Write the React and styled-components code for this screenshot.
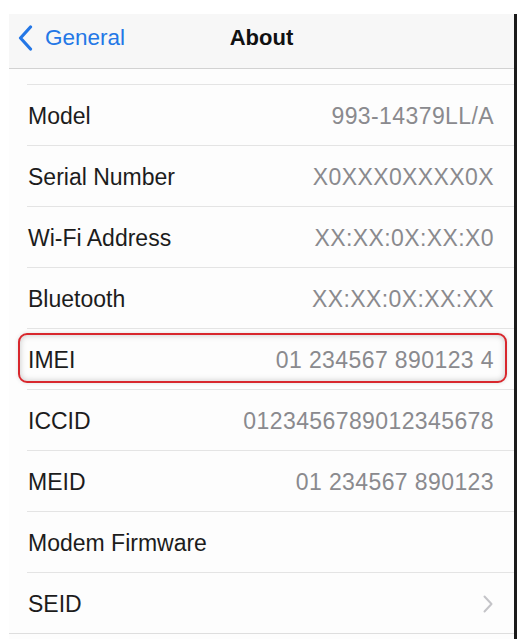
import React from 'react';
import styled, { createGlobalStyle, css } from 'styled-components';

const GlobalStyle = createGlobalStyle`
  html, body {
    margin: 0;
    padding: 0;
    background: #ffffff;
  }
  body {
    font-family: "Liberation Sans", Arial, Helvetica, sans-serif;
  }
`;

const Frame = styled.div`
  padding: 14px 0 0 9px;
  height: 639px;
  box-sizing: border-box;
  overflow: hidden;
`;

const Screen = styled.div`
  width: 505px;
  height: 625px;
  border-right: 3px solid #1b1b1b;
  display: flex;
  flex-direction: column;
  background: #fdfdfd;
`;

const NavBar = styled.div`
  height: 55px;
  box-sizing: border-box;
  flex-shrink: 0;
  background: #f7f7f7;
  border-bottom: 1px solid #d2d2d2;
  display: grid;
  grid-template-columns: 1fr auto 1fr;
  align-items: center;
  padding-bottom: 7px;
`;

const BackButton = styled.div`
  display: flex;
  align-items: center;
  gap: 12px;
  padding-left: 9px;
  color: #2477e6;
  font-size: 22.5px;
  svg {
    display: block;
  }
`;

const Title = styled.div`
  font-weight: 700;
  font-size: 22px;
  color: #111111;
`;

const Spacer = styled.div`
  height: 15px;
  flex-shrink: 0;
`;

const List = styled.div`
  padding-left: 18px;
  border-bottom: 1px solid #dedede;
`;

const Row = styled.div`
  position: relative;
  border-top: 1px solid #e4e4e4;
  padding: 2px 20px 0 1px;
  box-sizing: border-box;
  height: 61px;
  display: flex;
  align-items: center;
  justify-content: space-between;
  font-size: 23px;

  ${(p) =>
    p.$highlighted &&
    css`
      &::after {
        content: '';
        position: absolute;
        top: 4px;
        bottom: 6px;
        left: -9px;
        right: 7px;
        border: 2.5px solid #d8272d;
        border-radius: 9px;
        box-shadow: inset 0 0 6px rgba(0, 0, 0, 0.22), 0 0 4px rgba(0, 0, 0, 0.12);
        pointer-events: none;
      }
    `}
`;

const Label = styled.span`
  color: #1c1c1c;
`;

const Value = styled.span`
  color: #8a8a8e;
  letter-spacing: 0.4px;
`;

const Chevron = styled.svg`
  margin-right: 1px;
`;

const rows = [
  { label: 'Model', value: '993-14379LL/A' },
  { label: 'Serial Number', value: 'X0XXX0XXXX0X' },
  { label: 'Wi-Fi Address', value: 'XX:XX:0X:XX:X0' },
  { label: 'Bluetooth', value: 'XX:XX:0X:XX:XX' },
  { label: 'IMEI', value: '01 234567 890123 4', highlighted: true },
  { label: 'ICCID', value: '0123456789012345678' },
  { label: 'MEID', value: '01 234567 890123' },
  { label: 'Modem Firmware', value: '' },
  { label: 'SEID', chevron: true },
];

const App = () => {
  return (
    <>
      <GlobalStyle />
      <Frame>
        <Screen>
          <NavBar>
            <BackButton>
              <svg width="15" height="26" viewBox="0 0 15 26" fill="none">
                <path d="M12.5 2 L2.5 13 L12.5 24" stroke="#2477e6" strokeWidth="3.2" strokeLinecap="round" strokeLinejoin="round" />
              </svg>
              General
            </BackButton>
            <Title>About</Title>
            <div />
          </NavBar>
          <Spacer />
          <List>
            {rows.map((row) => (
              <Row key={row.label} $highlighted={row.highlighted}>
                <Label>{row.label}</Label>
                {row.chevron ? (
                  <Chevron width="10" height="18" viewBox="0 0 10 18" fill="none">
                    <path d="M1.5 1.5 L8.5 9 L1.5 16.5" stroke="#c4c4c8" strokeWidth="2" strokeLinecap="round" strokeLinejoin="round" />
                  </Chevron>
                ) : (
                  <Value>{row.value}</Value>
                )}
              </Row>
            ))}
          </List>
        </Screen>
      </Frame>
    </>
  );
};

export default App;
